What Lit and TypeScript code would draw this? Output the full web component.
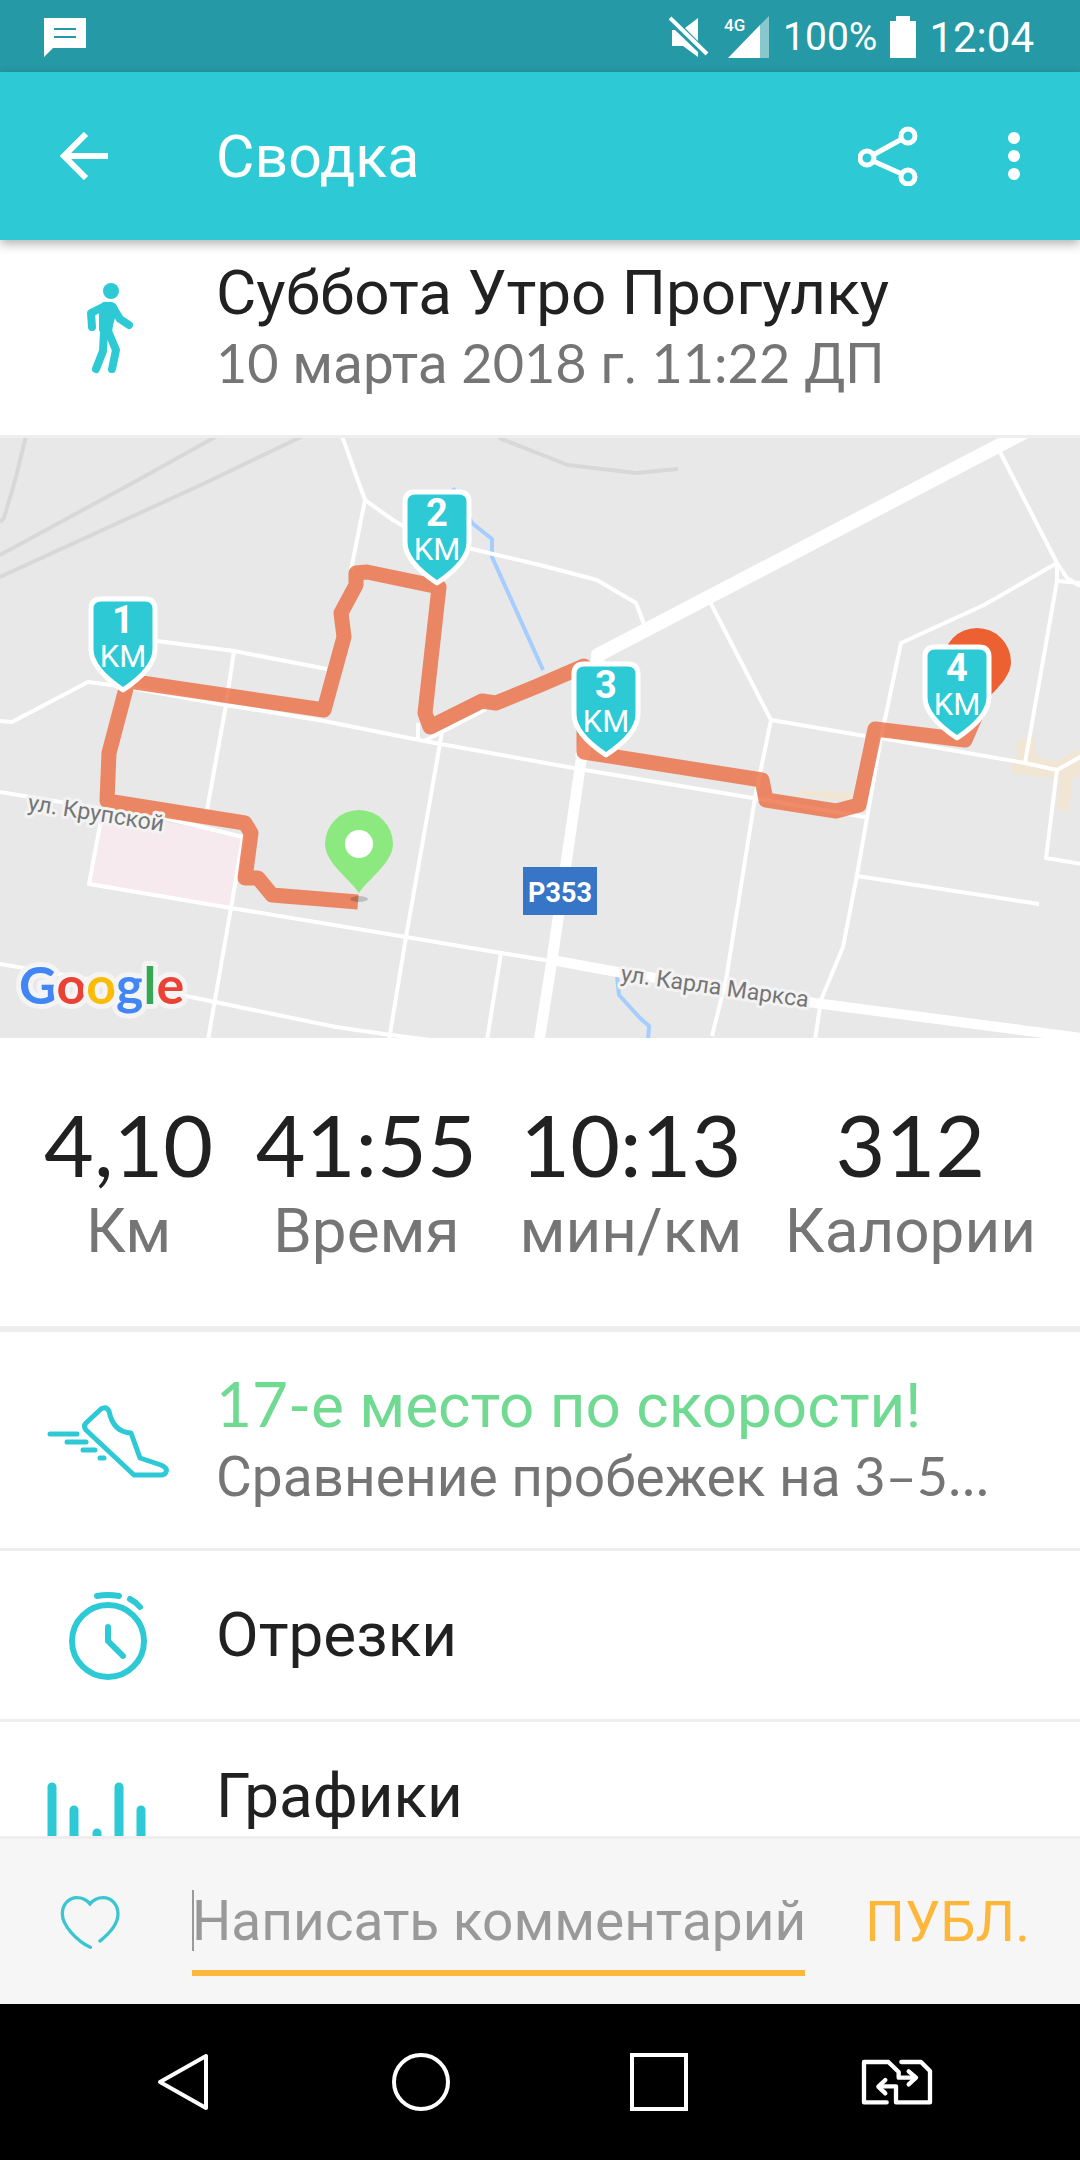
import { LitElement, html, svg, css } from "lit";
import { customElement, property } from "lit/decorators.js";

type IconName = "walk" | "shoe" | "stopwatch" | "bars";

const icons = {
  walk: svg`
    <circle cx="67" cy="11" r="8" fill="currentColor" />
    <g fill="none" stroke="currentColor" stroke-linecap="round" stroke-linejoin="round">
      <path stroke-width="8" d="M48 47L47 33L61 26" />
      <path stroke-width="8" d="M69 28L76 39L85 45" />
      <path stroke-width="8" d="M60 52L59 71L52 89" />
      <path stroke-width="8" d="M64 51L72 70L68 89" />
    </g>
    <path fill="currentColor" d="M59 22H68Q72 23 74 28L71 38Q69 44 68 52L58 56L55 50V28Z" />`,
  shoe: svg`
    <g fill="none" stroke="currentColor" stroke-width="5" stroke-linecap="round" stroke-linejoin="round">
      <path d="M6 41H33M23 49H42M39 57H51M56 65H60" />
      <path d="M42 30L57 16Q62 13 65 18Q69 39 87 40L96 65L117 72Q124 75 122 79Q121 82 117 82H90L42 37Q39 33 42 30Z" />
    </g>`,
  stopwatch: svg`
    <g fill="none" stroke="currentColor" stroke-width="6" stroke-linecap="round" stroke-linejoin="round">
      <circle cx="64" cy="54" r="36" />
      <path d="M64 40V54L79 69" />
      <path d="M53 9Q64 7 75 9M86 12Q92 15 96 20" />
    </g>`,
  bars: svg`
    <g fill="none" stroke="currentColor" stroke-width="9" stroke-linecap="round">
      <path d="M8 27V91M30 50V91M53 73V91M75 27V91M97 50V91" />
    </g>`,
};

@customElement("activity-row")
class ActivityRow extends LitElement {
  @property() icon: IconName = "walk";

  static styles = css`
    :host {
      display: flex;
      align-items: center;
      gap: 44px;
      padding: 38px 44px 36px;
    }
    .icon {
      flex: none;
      width: 128px;
      height: 96px;
      color: #2dcad6;
    }
    .text {
      flex: 1;
      min-width: 0;
    }
  `;

  render() {
    return html`
      <svg class="icon" viewBox="0 0 128 96" aria-hidden="true">${icons[this.icon]}</svg>
      <div class="text"><slot></slot></div>
    `;
  }
}

const kilometreMarks = [
  { n: 1, x: 123, y: 158 },
  { n: 2, x: 437, y: 51 },
  { n: 3, x: 606, y: 223 },
  { n: 4, x: 957, y: 206 },
];

const pin = "M0 83C-8 70 -34 53 -34 34A34 34 0 0 1 34 34C34 53 8 70 0 83Z";

@customElement("route-map")
class RouteMap extends LitElement {
  static styles = css`
    :host {
      display: block;
      background: #e8e8e8;
    }
    .map {
      display: block;
      width: 100%;
      height: auto;
      font-family: Roboto, sans-serif;
    }
    .rail {
      stroke: #d8d8d8;
      stroke-width: 4;
    }
    .water {
      stroke: #a5cdff;
      stroke-width: 4;
    }
    .street {
      stroke: #fff;
      stroke-width: 4;
    }
    .highway {
      stroke: #fff;
    }
    .route {
      stroke: #eb6a3e;
      stroke-opacity: 0.78;
      stroke-width: 15;
    }
    .line {
      fill: none;
      stroke-linejoin: round;
    }
    .label {
      fill: #757575;
      stroke: #f3f3f3;
      stroke-width: 6;
      stroke-linejoin: round;
      paint-order: stroke;
      font-size: 23px;
    }
    .shield {
      fill: #fff;
      font-size: 27px;
      font-weight: 700;
      text-anchor: middle;
    }
    .mark {
      fill: #fff;
      font-size: 38px;
      font-weight: 700;
      text-anchor: middle;
    }
    .unit {
      fill: #fff;
      font-size: 31px;
      text-anchor: middle;
    }
    .brand {
      font-family: Lato, sans-serif;
      font-size: 52px;
      font-weight: 700;
      stroke: #f4f4f4;
      stroke-width: 10;
      stroke-linejoin: round;
      paint-order: stroke;
    }
    .blue { fill: #4285f4; }
    .red { fill: #ea4335; }
    .yellow { fill: #fbbc05; }
    .green { fill: #34a853; }
  `;

  render() {
    return html`
      <svg class="map" viewBox="0 0 1080 600" role="img" aria-label="Карта маршрута">
        <path fill="#f0e6d3" d="M798 352L852 354V364L798 357ZM1017 302L1036 300V319L1057 323L1080 311V336L1072 342L1069 373L1057 371L1059 341L1012 335L1013 321H1017Z" />
        <path fill="#f6eaee" d="M103 372L243 399L231 470L89 446Z" />

        <g class="line rail">
          <path d="M26 -2L16 39L4 80L0 84M217 -2L138 42L0 117M303 -2L203 46L0 139" />
          <path d="M499 0L540 16L568 27L636 35L678 31" />
        </g>
        <g class="line water">
          <path d="M453 50L472 85L492 101V119L543 232M617 538L619 557L640 580L649 588L648 602" />
        </g>
        <g class="line street">
          <path d="M342 -2L365 62L393 82L405 89L472 111L540 127L597 142L636 165L644 186" />
          <path d="M365 62L351 132M119 199L157 203L234 213L327 231M234 213L226 267L207 372" />
          <path d="M0 283L12 284L88 244L119 248L226 267L324 283L424 303L540 324L585 332L753 360L865 379" />
          <path d="M418 285V300M424 303L442 294L486 271M442 294L406 499L389 602" />
          <path d="M0 354L103 371L165 380L243 399L231 470L208 602M103 371L89 446L231 470L406 499L501 515L557 524M501 515L487 602" />
          <path d="M0 526L186 558L215 564L336 589L391 597L430 602" />
          <path d="M1000 14L1057 125L1067 140L1080 148M1057 143L1080 145M1057 125L984 167L901 205L881 300" />
          <path d="M1057 125V143L1025 325M709 162L771 282L865 298M771 282L755 360L726 542L712 598" />
          <path d="M881 300L1025 325L1057 332L1082 318M1057 332L1046 420L1082 426" />
          <path d="M881 300L857 437L843 509L821 562L815 602M857 438L1039 466" />
        </g>
        <g class="line highway">
          <path stroke-width="14" d="M1040 -14L709 159L598 217Q596 260 582 320" />
          <path stroke-width="11" d="M582 316L552 522L539 604" />
          <path stroke-width="10" d="M552 522L617 534L815 565L1082 600" />
        </g>

        <path class="line route" d="M358 464L272 457L258 440H245L251 395L245 385L107 363L109 315L128 243L324 272L344 199L341 175L356 147V135L367 134L439 149L425 275L430 289L482 263L496 265L540 247L584 228V314L762 342L766 362L836 373L859 367L875 291L965 302L979 270" />

        <text class="label" transform="translate(27 372) rotate(9)">ул. Крупской</text>
        <text class="label" transform="translate(620 543) rotate(8)">ул. Карла Маркса</text>

        <rect x="523" y="429" width="74" height="48" fill="#3776c6" />
        <text class="shield" x="560" y="464">Р353</text>

        <ellipse cx="359" cy="461" rx="9" ry="3" fill="#000" fill-opacity="0.18" />
        <g transform="translate(359 372)">
          <path d=${pin} fill="#8ce97f" />
          <circle cy="34" r="14" fill="#fff" />
        </g>
        <path d=${pin} fill="#ed6031" transform="translate(977 190)" />

        ${kilometreMarks.map(
          (m) => svg`
            <g transform=${`translate(${m.x} ${m.y})`}>
              <path fill="#2dcad6" stroke="#fff" stroke-width="5" stroke-linejoin="round"
                d="M-32 13Q-32 3 -22 3H22Q32 3 32 13V53C32 71 12 86 0 94C-12 86 -32 71 -32 53Z" />
              <text class="mark" y="37">${m.n}</text>
              <text class="unit" y="71">KM</text>
            </g>`
        )}

        <text class="brand" x="19" y="566"><tspan class="blue">G</tspan><tspan class="red">o</tspan><tspan class="yellow">o</tspan><tspan class="blue">g</tspan><tspan class="green">l</tspan><tspan class="red">e</tspan></text>
      </svg>
    `;
  }
}

const stats = [
  { value: "4,10", label: "Км" },
  { value: "41:55", label: "Время" },
  { value: "10:13", label: "мин/км" },
  { value: "312", label: "Калории" },
];

@customElement("app-root")
class AppRoot extends LitElement {
  static styles = css`
    :host {
      display: flex;
      flex-direction: column;
      height: 100vh;
      overflow: hidden;
      background: #fff;
      color: #212121;
      font-family: Roboto, sans-serif;
    }
    button {
      display: flex;
      align-items: center;
      justify-content: center;
      margin: 0;
      padding: 0;
      border: 0;
      background: none;
      color: inherit;
      font: inherit;
    }
    h1, h2, p, dl, dd {
      margin: 0;
      padding: 0;
      font-weight: 400;
    }
    .glyph {
      display: block;
      flex: none;
    }
    .status {
      display: flex;
      align-items: center;
      box-sizing: border-box;
      height: 72px;
      padding: 2px 46px 0 44px;
      background: #2599a5;
      color: #fff;
      font-size: 39px;
    }
    .tray {
      display: flex;
      align-items: center;
      margin-left: auto;
      gap: 13px;
    }
    .clock {
      font-size: 42px;
    }
    .network {
      font-size: 17px;
      font-weight: 500;
    }
    .appbar {
      position: relative;
      z-index: 1;
      display: flex;
      align-items: center;
      height: 168px;
      background: #2dcad6;
      color: #fff;
      box-shadow: 0 4px 10px rgba(0, 0, 0, 0.3);
    }
    .back {
      width: 168px;
      height: 168px;
      margin-right: 48px;
    }
    .heading {
      flex: 1;
      font-size: 59px;
    }
    .share {
      width: 120px;
      height: 168px;
    }
    .more {
      width: 132px;
      height: 168px;
    }
    .feed {
      flex: 1;
      min-height: 0;
      overflow: hidden;
    }
    .summary {
      padding-top: 17px;
    }
    .ruled {
      border-bottom: 3px solid #eee;
    }
    .title {
      font-size: 62px;
      line-height: 72px;
    }
    .sub {
      overflow: hidden;
      color: #757575;
      font-size: 55px;
      line-height: 70px;
      text-overflow: ellipsis;
      white-space: nowrap;
    }
    .num {
      font-family: Lato, Roboto, sans-serif;
      line-height: 0;
    }
    .sub .num {
      font-size: 54px;
    }
    .praise {
      color: #71da92;
    }
    .single {
      padding-top: 36px;
      padding-bottom: 36px;
    }
    .peek {
      align-items: flex-start;
    }
    .stats {
      display: flex;
      justify-content: space-between;
      padding: 55px 44px 59px;
      border-bottom: 6px solid #eee;
    }
    .stat {
      display: flex;
      flex-direction: column-reverse;
      text-align: center;
    }
    .value {
      font-family: Lato, sans-serif;
      font-size: 86px;
      line-height: 102px;
    }
    .caption {
      color: #757575;
      font-size: 62px;
      line-height: 72px;
    }
    .composer {
      display: flex;
      align-items: center;
      height: 165px;
      padding: 0 50px 0 54px;
      border-top: 3px solid #eee;
      background: #f6f6f6;
    }
    .like {
      width: 72px;
      height: 96px;
      margin-right: 66px;
      color: #3bc5d1;
    }
    .field {
      display: flex;
      flex: 1;
      align-items: center;
      min-width: 0;
      margin-top: 20px;
      padding-bottom: 16px;
      border-bottom: 6px solid #fdb73b;
    }
    .caret {
      flex: none;
      width: 2px;
      height: 61px;
      margin-right: -2px;
      background: #9a9a9a;
    }
    .comment {
      flex: 1;
      min-width: 0;
      height: 66px;
      padding: 0;
      border: 0;
      outline: 0;
      background: none;
      color: #212121;
      font: inherit;
      font-size: 55px;
    }
    .comment::placeholder {
      color: #999;
      opacity: 1;
    }
    .send {
      margin-left: 60px;
      color: #fdb73b;
      font-size: 56px;
    }
    .system {
      display: grid;
      grid-template-columns: repeat(4, 1fr);
      height: 156px;
      padding: 0 64px;
      background: #000;
      color: #fff;
    }
  `;

  render() {
    return html`
      <div class="status">
        <svg class="glyph" width="42" height="39" viewBox="0 0 42 39" aria-hidden="true">
          <path fill="#fff" d="M0 0H42V30H9L0 39Z" />
          <path stroke="#2599a5" stroke-width="2" d="M10 11H32M10 19H32" />
        </svg>
        <div class="tray">
          <svg class="glyph" width="40" height="42" viewBox="0 0 40 42" aria-hidden="true">
            <path fill="#fff" d="M29 2V25L16 12ZM3 14H6L29 36V41L14 30H3Z" />
            <path stroke="#fff" stroke-width="4" d="M1 2L38 38" />
          </svg>
          <svg class="glyph" width="48" height="42" viewBox="0 0 48 42" role="img" aria-label="4G">
            <path fill="#fff" d="M6 42L38 9V42Z" />
            <path fill="#fff" fill-opacity="0.45" d="M38 9L47 0V42H38Z" />
            <text class="network" x="2" y="15" fill="#fff">4G</text>
          </svg>
          <span>100%</span>
          <svg class="glyph" width="26" height="42" viewBox="0 0 26 42" aria-hidden="true">
            <path fill="#fff" d="M6 0H20V5H26V42H0V5H6Z" />
          </svg>
          <span class="clock">12:04</span>
        </div>
      </div>

      <header class="appbar">
        <button class="back" aria-label="Назад">
          <svg class="glyph" width="48" height="48" viewBox="0 0 48 48">
            <path fill="none" stroke="#fff" stroke-width="6" d="M48 24H4M26 2L4 24L26 46" />
          </svg>
        </button>
        <h1 class="heading">Сводка</h1>
        <button class="share" aria-label="Поделиться">
          <svg class="glyph" width="60" height="60" viewBox="0 0 60 60">
            <g fill="none" stroke="#fff" stroke-width="5">
              <circle cx="9" cy="32" r="7" />
              <circle cx="50" cy="10" r="7" />
              <circle cx="50" cy="51" r="7" />
              <path d="M15 29L44 13M15 35L44 48" />
            </g>
          </svg>
        </button>
        <button class="more" aria-label="Ещё">
          <svg class="glyph" width="12" height="48" viewBox="0 0 12 48">
            <g fill="#fff">
              <circle cx="6" cy="6" r="6" />
              <circle cx="6" cy="24" r="6" />
              <circle cx="6" cy="42" r="6" />
            </g>
          </svg>
        </button>
      </header>

      <main class="feed">
        <activity-row class="summary ruled" icon="walk">
          <h2 class="title">Суббота Утро Прогулку</h2>
          <p class="sub"><span class="num">10</span> марта <span class="num">2018</span> г. <span class="num">11:22</span> ДП</p>
        </activity-row>

        <route-map></route-map>

        <dl class="stats">
          ${stats.map(
            (s) => html`
              <div class="stat">
                <dt class="caption">${s.label}</dt>
                <dd class="value">${s.value}</dd>
              </div>`
          )}
        </dl>

        <activity-row class="ruled" icon="shoe">
          <h2 class="title praise"><span class="num">17-</span>е место по скорости!</h2>
          <p class="sub">Сравнение пробежек на <span class="num">3–5…</span></p>
        </activity-row>
        <activity-row class="single ruled" icon="stopwatch">
          <h2 class="title">Отрезки</h2>
        </activity-row>
        <activity-row class="peek" icon="bars">
          <h2 class="title">Графики</h2>
        </activity-row>
      </main>

      <form class="composer" @submit=${(e: Event) => e.preventDefault()}>
        <button class="like" type="button" aria-label="Нравится">
          <svg class="glyph" width="60" height="54" viewBox="60 72 180 164">
            <path fill="none" stroke="currentColor" stroke-width="10" stroke-linecap="round"
              d="M151 231C110 212 66 165 66 130C66 98 88 80 110 80C128 80 142 89 150 99C158 89 172 80 190 80C214 80 235 100 235 130C235 160 208 190 180 212" />
          </svg>
        </button>
        <label class="field">
          <span class="caret"></span>
          <input class="comment" type="text" placeholder="Написать комментарий" aria-label="Написать комментарий" />
        </label>
        <button class="send" type="submit">ПУБЛ.</button>
      </form>

      <nav class="system">
        <button aria-label="Назад">
          <svg class="glyph" width="58" height="58" viewBox="0 0 58 58">
            <path fill="none" stroke="#fff" stroke-width="4" stroke-linejoin="round" d="M52 3V55L6 29Z" />
          </svg>
        </button>
        <button aria-label="Главный экран">
          <svg class="glyph" width="58" height="58" viewBox="0 0 58 58">
            <circle cx="29" cy="29" r="27" fill="none" stroke="#fff" stroke-width="4" />
          </svg>
        </button>
        <button aria-label="Недавние">
          <svg class="glyph" width="58" height="58" viewBox="0 0 58 58">
            <rect x="2" y="2" width="54" height="54" fill="none" stroke="#fff" stroke-width="4" />
          </svg>
        </button>
        <button aria-label="Сменить SIM-карту">
          <svg class="glyph" width="72" height="46" viewBox="63 56 216 138">
            <g fill="none" stroke="#fff" stroke-width="13" stroke-linecap="round" stroke-linejoin="round">
              <path d="M140 186H72V65H145L176 95V112H222" />
              <path d="M184 65H243L270 92V186H168V138H120" />
              <path d="M206 93L228 112L206 132M136 119L115 139L136 159" />
            </g>
          </svg>
        </button>
      </nav>
    `;
  }
}
